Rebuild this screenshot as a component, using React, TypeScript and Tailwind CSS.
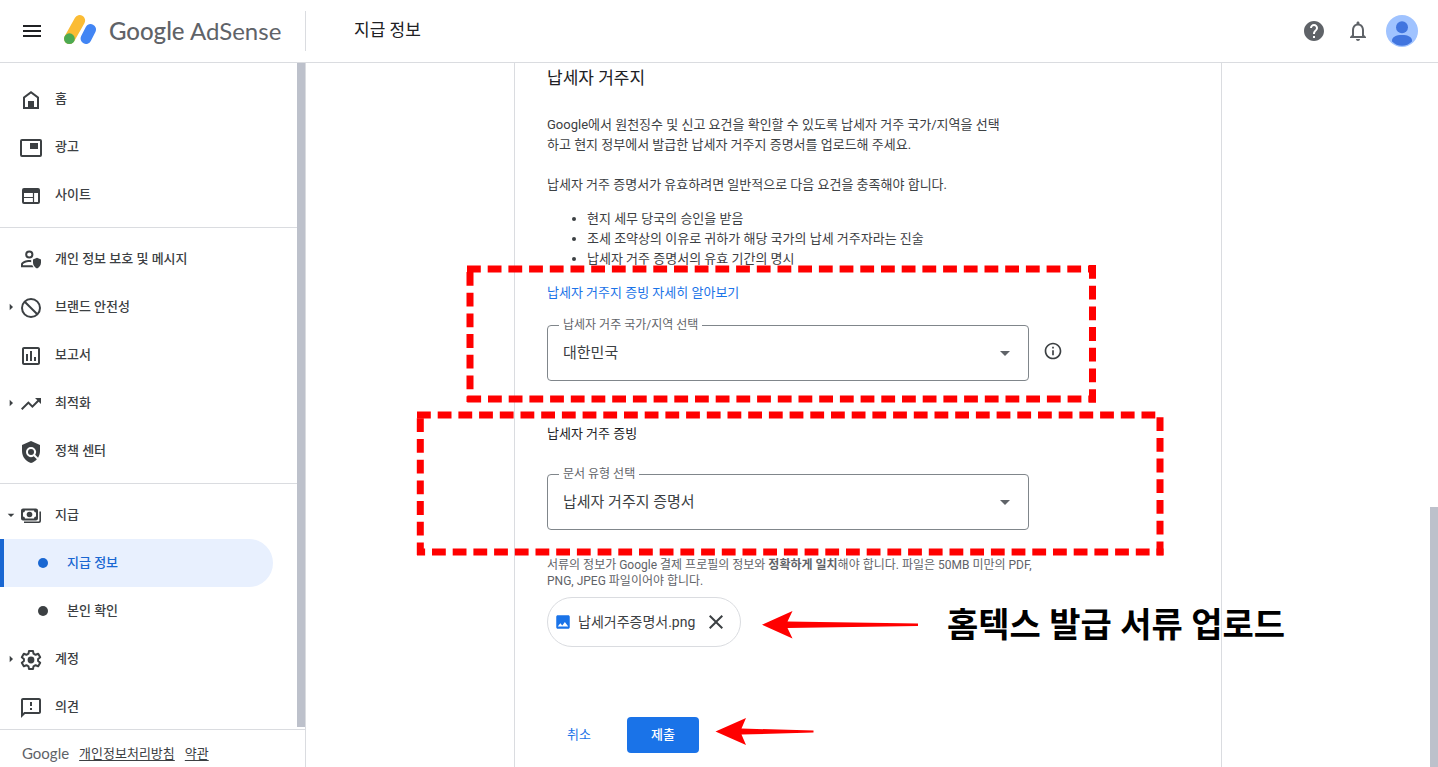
import type { ReactNode } from "react";
import {
  MdArrowDropDown,
  MdArrowRight,
  MdClose,
  MdHelp,
  MdImage,
  MdInfoOutline,
  MdMenu,
  MdNotificationsNone,
  MdOutlineAssessment,
  MdOutlineFeedback,
  MdPolicy,
  MdTrendingUp,
} from "react-icons/md";

type NavItem = {
  label: string;
  icon?: ReactNode;
  caret?: "right" | "down";
  active?: boolean;
};

function HomeIcon() {
  return (
    <svg width="24" height="24" viewBox="0 0 24 24" fill="currentColor">
      <path
        fillRule="evenodd"
        d="M12 3l8 6v12H4V9l8-6zm0 2.5L6 10v9h12v-9l-6-4.5z"
      />
      <path d="M9 13h6v7H9z" />
    </svg>
  );
}

function AdsIcon() {
  return (
    <svg width="24" height="24" viewBox="0 0 24 24" fill="none">
      <rect
        x="2"
        y="4"
        width="20"
        height="16"
        rx="1"
        stroke="currentColor"
        strokeWidth="2"
      />
      <path d="M11 7h8v6h-8z" fill="currentColor" />
    </svg>
  );
}

function SitesIcon() {
  return (
    <svg width="24" height="24" viewBox="0 0 24 24" fill="none">
      <rect
        x="4"
        y="5"
        width="16"
        height="14"
        rx="1"
        stroke="currentColor"
        strokeWidth="2"
      />
      <path d="M4 5h16v4H4z" fill="currentColor" />
      <path d="M4 13.5h10.5M14.5 9v10" stroke="currentColor" strokeWidth="1.2" />
    </svg>
  );
}

function PrivacyIcon() {
  return (
    <svg width="24" height="24" viewBox="0 0 24 24" fill="none">
      <circle
        cx="10.3"
        cy="6.5"
        r="3.1"
        stroke="currentColor"
        strokeWidth="2"
      />
      <path
        d="M12.2 12.2c-.6-.1-1.3-.2-1.9-.2C7.6 12 2 13.4 2 16.3v3h12.6c-.6-.6-1-1.3-1.3-2H4v-1c0-.7 3.2-2.3 6.3-2.3.7 0 1.300.1 1.9.2z"
        fill="currentColor"
      />
      <path
        d="M18 9.7l4 1.8v3c0 2.7-1.6 5-4 5.9-2.4-.9-4-3.2-4-5.9v-3z"
        fill="currentColor"
      />
    </svg>
  );
}

function BlockIcon() {
  return (
    <svg width="24" height="24" viewBox="0 0 24 24" fill="none">
      <circle cx="12" cy="12" r="9" stroke="currentColor" strokeWidth="2" />
      <path d="M5.7 5.7l12.6 12.6" stroke="currentColor" strokeWidth="2" />
    </svg>
  );
}

function PaymentsIcon() {
  return (
    <svg width="24" height="24" viewBox="0 0 24 24" fill="currentColor">
      <path
        fillRule="evenodd"
        d="M4 4.5h13a2 2 0 0 1 2 2v8a2 2 0 0 1-2 2H4a2 2 0 0 1-2-2v-8a2 2 0 0 1 2-2zm2 2a2 2 0 0 1-2 2v4a2 2 0 0 1 2 2h9a2 2 0 0 1 2-2v-4a2 2 0 0 1-2-2z"
      />
      <circle cx="10.5" cy="10.5" r="2.8" />
      <path d="M20.4 7.5H22V17a2 2 0 0 1-2 2H5v-1.6h14.4a1 1 0 0 0 1-1z" />
    </svg>
  );
}

function GearIcon() {
  return (
    <svg width="24" height="24" viewBox="0 0 24 24" fill="none">
      <path
        d="M10 3h4l.5 2.6 2.100 1.200 2.600-1 2 3.500L19.100 11v2l2.100 1.700-2 3.500-2.600-1-2.100 1.200L14 21h-4l-.5-2.600-2.100-1.200-2.600 1-2-3.500L4.900 13v-2L2.800 9.300l2-3.500 2.600 1 2.100-1.200z"
        stroke="currentColor"
        strokeWidth="2"
        strokeLinejoin="round"
      />
      <circle cx="12" cy="12" r="3.4" fill="currentColor" />
    </svg>
  );
}

function AdSenseMark() {
  return (
    <svg width="33" height="30" viewBox="0 0 33 30" strokeLinecap="round">
      <path d="M5.5 23.7L15.7 5.5" stroke="#fbbc34" strokeWidth="10.8" />
      <path d="M22 23.5l4.6-9" stroke="#4285f4" strokeWidth="10.8" />
      <circle cx="5.4" cy="23.7" r="5.4" fill="#4caa52" />
    </svg>
  );
}

function Avatar() {
  return (
    <svg width="32" height="32" viewBox="0 0 32 32">
      <circle cx="16" cy="16" r="16" fill="#a0c3ff" />
      <circle cx="16" cy="12.3" r="6" fill="#4175df" />
      <path
        d="M6 26.5v-1c0-3.500 4-5.500 10-5.500s10 2 10 5.500v1a14 14 0 0 1-20 0z"
        fill="#4175df"
      />
    </svg>
  );
}

const groups: NavItem[][] = [
  [
    { label: "홈", icon: <HomeIcon /> },
    { label: "광고", icon: <AdsIcon /> },
    { label: "사이트", icon: <SitesIcon /> },
  ],
  [
    { label: "개인 정보 보호 및 메시지", icon: <PrivacyIcon /> },
    { label: "브랜드 안전성", icon: <BlockIcon />, caret: "right" },
    { label: "보고서", icon: <MdOutlineAssessment size={24} /> },
    { label: "최적화", icon: <MdTrendingUp size={24} />, caret: "right" },
    { label: "정책 센터", icon: <MdPolicy size={24} /> },
  ],
  [
    { label: "지급", icon: <PaymentsIcon />, caret: "down" },
    { label: "지급 정보", active: true },
    { label: "본인 확인" },
    { label: "계정", icon: <GearIcon />, caret: "right" },
    { label: "의견", icon: <MdOutlineFeedback size={24} /> },
  ],
];

function NavRow({ item }: { item: NavItem }) {
  if (!item.icon) {
    return (
      <a
        href="#"
        className={
          "flex h-12 items-center mr-6 border-l-4 pl-[34px] gap-[19px] rounded-r-full " +
          (item.active
            ? "border-[#1967d2] bg-[#e8f0fe] text-[#1967d2]"
            : "border-transparent")
        }
      >
        <span className="size-[10px] rounded-full bg-current" />
        <span>{item.label}</span>
      </a>
    );
  }

  return (
    <a href="#" className="flex h-12 items-center">
      <span className="flex w-[19px] justify-center pl-[3px]">
        {item.caret === "right" && <MdArrowRight size={16} />}
        {item.caret === "down" && <MdArrowDropDown size={16} />}
      </span>
      <span className="w-6 pt-0.5">{item.icon}</span>
      <span className="pl-3">{item.label}</span>
    </a>
  );
}

function Sidebar() {
  return (
    <aside className="flex w-[306px] shrink-0 flex-col border-r border-[#dadce0]">
      <div className="flex min-h-0 flex-1">
        <nav className="flex-1 overflow-hidden pt-1 text-[13px] font-medium text-[#3c4043]">
          {groups.map((group, i) => (
            <div
              key={i}
              className="border-b border-[#dadce0] pt-[7px] pb-2 first:pt-2 last:border-b-0"
            >
              {group.map((item) => (
                <NavRow key={item.label} item={item} />
              ))}
            </div>
          ))}
        </nav>
        <div className="mb-0.5 w-2 bg-[#bdc1cb]" />
      </div>
      <footer className="flex h-[38px] shrink-0 items-center gap-2.5 border-t border-[#dadce0] pt-3 pb-0.5 pl-[22px] text-[13px] text-[#3c4043]">
        <span className="font-['Lato'] text-[15px] text-[#5f6368]">Google</span>
        <a href="#" className="underline underline-offset-2">
          개인정보처리방침
        </a>
        <a href="#" className="underline underline-offset-2">
          약관
        </a>
      </footer>
    </aside>
  );
}

function SelectField({
  id,
  label,
  value,
}: {
  id: string;
  label: string;
  value: string;
}) {
  return (
    <fieldset className="h-16 w-[482px] min-w-0 rounded border border-[#80868b]">
      <legend className="ml-[11px] h-4 px-1 text-[12px] leading-4 text-[#5f6368]">
        <label htmlFor={id}>{label}</label>
      </legend>
      <div className="flex h-10 items-center pr-[11px]">
        <select
          id={id}
          className="h-10 flex-1 appearance-none bg-transparent pl-[15px] text-[15px] text-[#3c4043] outline-none"
        >
          <option>{value}</option>
        </select>
        <MdArrowDropDown size={24} className="text-[#5f6368]" />
      </div>
    </fieldset>
  );
}

// Red guide boxes and arrows laid over the form
function Annotations() {
  return (
    <>
      <svg
        className="pointer-events-none absolute top-0 left-0 overflow-visible"
        width="706"
        height="704"
        viewBox="515 63 706 704"
        fill="none"
      >
        <g stroke="#ff0000" strokeWidth="7" strokeDasharray="13.8 6.9">
          <path d="M467 269H1096" />
          <path d="M470 272V402" />
          <path d="M1092.5 265V402.5" />
          <path d="M467.3 399H1096" />
          <path d="M417 415H1156" />
          <path d="M420.3 418.3V555" />
          <path d="M1160 417.2V555.5" />
          <path d="M417 552H1163.5" strokeDashoffset="5.7" />
        </g>
        <g fill="#ff0000">
          <path d="M762 624.7L792.5 611l-5 10.5 130.5 2v2.500l-130.500 2 5 10.500z" />
          <path d="M715.5 731.5L746 718l-4.500 10.500 72 2v2l-72 2 4.500 10.500z" />
        </g>
      </svg>
      <p className="absolute top-[538px] left-[432px] text-[34px] leading-[48px] font-bold whitespace-nowrap text-black">
        홈텍스 발급 서류 업로드
      </p>
    </>
  );
}

function TaxForm() {
  return (
    <form className="relative min-h-full w-[708px] border-x border-[#dadce0] px-8 pt-[3px] text-[13px] leading-5 text-[#3c4043]">
      <h2 className="text-[17px] leading-6 text-[#202124]">납세자 거주지</h2>
      <p className="mt-[25px]">
        Google에서 원천징수 및 신고 요건을 확인할 수 있도록 납세자 거주
        국가/지역을 선택
        <br />
        하고 현지 정부에서 발급한 납세자 거주지 증명서를 업로드해 주세요.
      </p>
      <p className="mt-5">
        납세자 거주 증명서가 유효하려면 일반적으로 다음 요건을 충족해야 합니다.
      </p>
      <ul className="mt-3.5 list-disc pl-10">
        <li>현지 세무 당국의 승인을 받음</li>
        <li>조세 조약상의 이유로 귀하가 해당 국가의 납세 거주자라는 진술</li>
        <li>납세자 거주 증명서의 유효 기간의 명시</li>
      </ul>
      <a href="#" className="mt-3.5 block w-fit text-[#1a73e8]">
        납세자 거주지 증빙 자세히 알아보기
      </a>
      <div className="mt-3.5 flex items-center gap-3.5">
        <SelectField
          id="country"
          label="납세자 거주 국가/지역 선택"
          value="대한민국"
        />
        <button type="button" aria-label="도움말" className="pt-1">
          <MdInfoOutline size={20} />
        </button>
      </div>
      <h3 className="mt-[43px] mb-[22px] text-[#202124]">납세자 거주 증빙</h3>
      <SelectField
        id="document"
        label="문서 유형 선택"
        value="납세자 거주지 증명서"
      />
      <p className="mt-[27px] text-[12px] leading-4 text-[#5f6368]">
        서류의 정보가 Google 결제 프로필의 정보와{" "}
        <b className="font-bold">정확하게 일치</b>해야 합니다. 파일은 50MB
        미만의 PDF,
        <br />
        PNG, JPEG 파일이어야 합니다.
      </p>
      <div className="mt-2 flex h-[50px] w-[194px] items-center rounded-full border border-[#dadce0] px-1.5">
        <MdImage size={18} className="text-[#1a73e8]" />
        <span className="flex-1 pl-1.5 text-[14px]">납세거주증명서.png</span>
        <button type="button" aria-label="삭제" className="mr-1.5">
          <MdClose size={24} />
        </button>
      </div>
      <div className="mt-[70px] flex gap-4 pb-3.5">
        <button type="button" className="h-9 w-16 rounded text-[#1a73e8]">
          취소
        </button>
        <button
          type="submit"
          className="h-9 rounded bg-[#1a73e8] px-6 font-medium text-white"
        >
          제출
        </button>
      </div>
      <Annotations />
    </form>
  );
}

export default function App() {
  return (
    <div className="flex h-screen flex-col overflow-hidden bg-white font-['Roboto','Noto_Sans_CJK_KR',sans-serif]">
      <header className="flex h-[63px] shrink-0 items-center border-b border-[#dadce0] pr-5 text-[#5f6368]">
        <div className="flex h-10 w-[306px] items-center border-r border-[#dadce0] pl-5">
          <button type="button" aria-label="메뉴" className="text-[#202124]">
            <MdMenu size={24} />
          </button>
          <div className="flex items-start gap-3 pl-5">
            <AdSenseMark />
            <span className="font-['Lato'] text-[24px] leading-8 whitespace-nowrap">
              <span className="font-medium">Google</span>{" "}
              <span>AdSense</span>
            </span>
          </div>
        </div>
        <h1 className="flex-1 pl-12 text-[17px] text-[#202124]">지급 정보</h1>
        <div className="flex items-center">
          <button type="button" aria-label="고객센터">
            <MdHelp size={24} />
          </button>
          <button type="button" aria-label="알림" className="ml-5">
            <MdNotificationsNone size={24} />
          </button>
          <button type="button" aria-label="계정" className="ml-4">
            <Avatar />
          </button>
        </div>
      </header>

      <div className="flex min-h-0 flex-1">
        <Sidebar />
        <main className="flex min-w-0 flex-1 justify-center overflow-hidden">
          <TaxForm />
        </main>
        <div className="flex w-2 flex-col justify-end">
          <div className="h-[37%] bg-[#bdc1cb]" />
        </div>
      </div>
    </div>
  );
}
